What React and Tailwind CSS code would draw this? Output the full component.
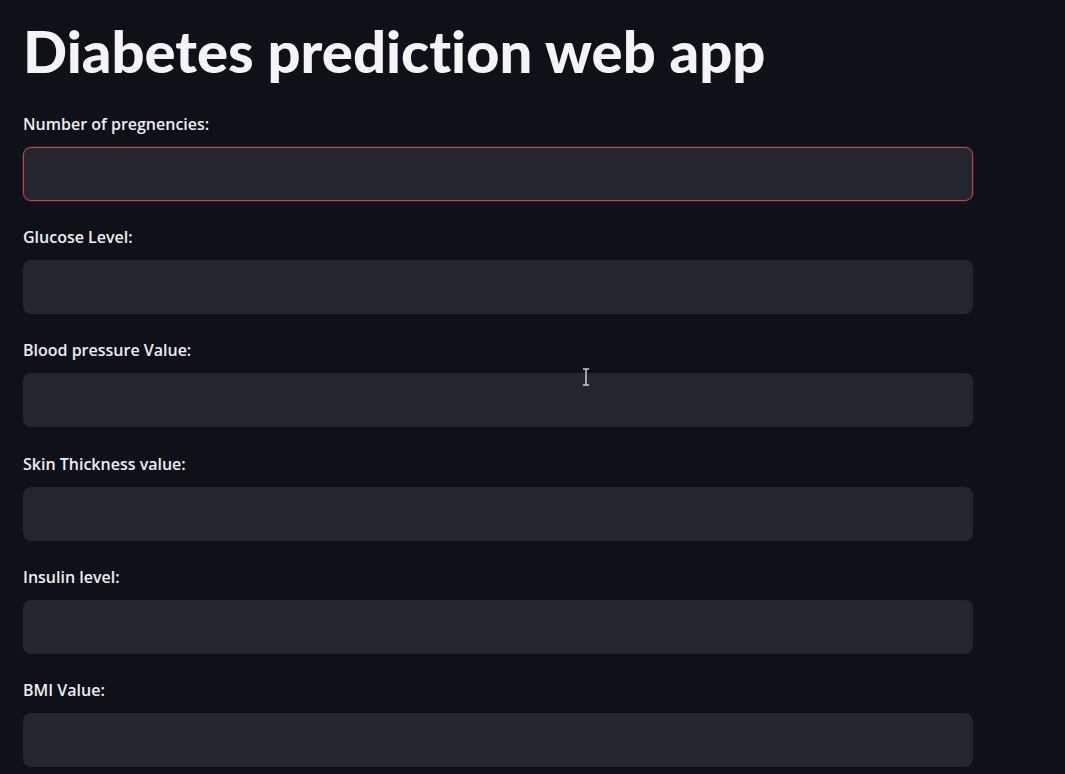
const fields = [
  "Number of pregnencies:",
  "Glucose Level:",
  "Blood pressure Value:",
  "Skin Thickness value:",
  "Insulin level:",
  "BMI Value:",
];

const Field = ({ label, focused }) => (
  <div className="flex flex-col">
    <label
      className="h-[33px] text-[16px] leading-[20px] font-semibold text-[#eceef1]"
      style={{ fontFamily: "'Open Sans', sans-serif" }}
    >
      {label}
    </label>
    <div
      className={
        "h-[54px] w-[950px] rounded-[8px] bg-[#24262e] " +
        (focused ? "border border-[#b04a55] shadow-[0_0_0_1px_rgba(120,30,40,0.5)]" : "")
      }
    />
  </div>
);

export default function App() {
  return (
    <div
      className="relative h-[774px] w-full overflow-hidden bg-[#0e1117] pl-[23px]"
      style={{ fontFamily: "Lato, 'Open Sans', sans-serif" }}
    >
      <h1 className="pt-[16px] h-[114px] text-[58px] font-black leading-[70px] text-[#f3f4f6] [font-variant-ligatures:none]">
        Diabetes prediction web app
      </h1>
      <div className="flex flex-col gap-[26.2px]">
        {fields.map((f, i) => (
          <Field key={f} label={f} focused={i === 0} />
        ))}
      </div>
      <svg className="absolute left-[581px] top-[368px]" width="10" height="18" viewBox="0 0 10 18">
        <path d="M2 1h6M5 1v16M2 17h6" stroke="#c9cbd1" strokeWidth="1.5" fill="none" />
      </svg>
    </div>
  );
}
